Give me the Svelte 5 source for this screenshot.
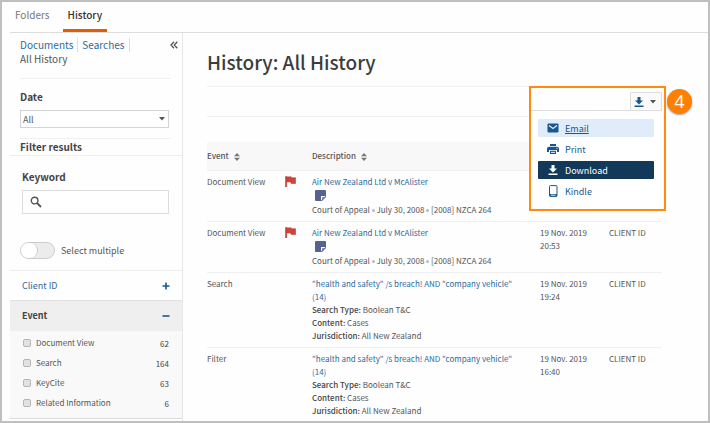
<script>
  let date = $state('All');
  let keyword = $state('');
  let multiple = $state(false);

  const events = [
    { id: 'view', label: 'Document View', count: 62 },
    { id: 'search', label: 'Search', count: 164 },
    { id: 'keycite', label: 'KeyCite', count: 63 },
    { id: 'related', label: 'Related Information', count: 6 }
  ];

  const rows = [
    { event: 'Document View', document: true, day: '', time: '', client: '' },
    { event: 'Document View', document: true, day: '19 Nov. 2019', time: '20:53', client: 'CLIENT ID' },
    { event: 'Search', document: false, day: '19 Nov. 2019', time: '19:24', client: 'CLIENT ID' },
    { event: 'Filter', document: false, day: '19 Nov. 2019', time: '16:40', client: 'CLIENT ID' }
  ];
</script>

{#snippet download()}
  <svg class="icon" viewBox="0 0 12 12" aria-hidden="true">
    <path d="M4.500 1h3v3.500H10L6 8.500 2 4.500h2.500zM1.500 9.500h9V11h-9z" fill="currentColor" />
  </svg>
{/snippet}

{#snippet sorter()}
  <svg class="sorter" viewBox="0 0 6 8" aria-hidden="true">
    <path d="M3 0l3 3.300H0zM3 8l3-3.300H0z" fill="currentColor" />
  </svg>
{/snippet}

<div class="frame">
  <nav class="tabs">
    <a href="#folders">Folders</a>
    <a href="#history" class="current" aria-current="page">History</a>
  </nav>

  <div class="body">
    <aside>
      <div class="scope">
        <div class="crumbs">
          <div><a href="#documents">Documents</a><a href="#searches">Searches</a></div>
          <button class="plain collapse" aria-label="Collapse panel">
            <svg viewBox="0 0 8 8" aria-hidden="true"><path d="M4 .8L1 4l3 3.200M7.300.8l-3 3.200 3 3.200" fill="none" stroke="currentColor" stroke-width="1.300" /></svg>
          </button>
        </div>
        <div class="all">All History</div>
      </div>
      <div class="date">
        <label for="date">Date</label>
        <div class="select">
          <select id="date" bind:value={date}><option>All</option></select>
          <svg viewBox="0 0 6 4" aria-hidden="true"><path d="M0 0h6L3 3.500z" fill="#555" /></svg>
        </div>
      </div>
      <h2>Filter results</h2>
      <div class="keyword">
        <label for="keyword">Keyword</label>
        <div class="search">
          <svg viewBox="0 0 12 12" aria-hidden="true"><circle cx="4.600" cy="4.600" r="3.300" fill="none" stroke="#555" stroke-width="1.400" /><path d="M7 7l4 4" stroke="#555" stroke-width="1.800" /></svg>
          <input id="keyword" type="text" bind:value={keyword} />
        </div>
        <label class="multiple">
          <input type="checkbox" role="switch" bind:checked={multiple} />
          Select multiple
        </label>
      </div>
      <button class="plain facet">
        <span>Client ID</span>
        <svg viewBox="0 0 8 8" aria-hidden="true"><path d="M4 .5v7M.5 4h7" stroke="#17578f" stroke-width="1.600" /></svg>
      </button>
      <button class="plain facet open">
        <span>Event</span>
        <svg viewBox="0 0 8 8" aria-hidden="true"><path d="M.5 4h7" stroke="#17578f" stroke-width="1.600" /></svg>
      </button>
      <ul class="events">
        {#each events as item}
          <li>
            <input type="checkbox" id={item.id} />
            <label for={item.id}>{item.label}</label>
            <span>{item.count}</span>
          </li>
        {/each}
      </ul>
    </aside>

    <main>
      <h1>History: All History</h1>
      <div class="toolbar">
        <div class="export">
          <button class="trigger" aria-label="Delivery options" aria-expanded="true">
            {@render download()}
            <svg class="caret" viewBox="0 0 6 4" aria-hidden="true"><path d="M0 0h6L3 3.500z" fill="#555" /></svg>
          </button>
          <div class="menu">
            <button class="plain hover">
              <svg class="icon" viewBox="0 0 12 12" aria-hidden="true"><rect x=".5" y="1.500" width="11" height="9" rx="1" fill="currentColor" /><path d="M2 3.500l4 3 4-3" fill="none" stroke="#e0ecfa" stroke-width="1.200" /></svg>
              <span>Email</span>
            </button>
            <button class="plain">
              <svg class="icon" viewBox="0 0 12 12" aria-hidden="true"><path d="M3 1h6v2H3zM2 3.700h8a2 2 0 0 1 2 2V9h-2V7H2v2H0V5.700a2 2 0 0 1 2-2zM3 7.800h6V11H3z" fill="currentColor" /><path d="M4 9.400h4" stroke="#fff" stroke-width=".9" /><circle cx="10" cy="5.300" r=".6" fill="#fff" /></svg>
              <span>Print</span>
            </button>
            <button class="plain selected">
              {@render download()}
              <span>Download</span>
            </button>
            <button class="plain">
              <svg class="icon" viewBox="0 0 12 12" aria-hidden="true"><rect x="2.500" y=".6" width="7.500" height="10.800" rx="1" fill="none" stroke="currentColor" /><path d="M2.500 9h7.500v2.400H2.500z" fill="currentColor" /><path d="M4 10.200h4.500" stroke="#fff" stroke-width=".9" /></svg>
              <span>Kindle</span>
            </button>
          </div>
          <div class="callout"></div>
          <div class="badge">4</div>
        </div>
      </div>

      <table>
        <colgroup><col class="c-event" /><col class="c-flag" /><col /><col class="c-date" /><col class="c-client" /></colgroup>
        <thead>
          <tr>
            <th scope="col">Event {@render sorter()}</th>
            <td></td>
            <th scope="col">Description {@render sorter()}</th>
            <td></td>
            <td></td>
          </tr>
        </thead>
        <tbody>
          {#each rows as row}
            <tr>
              <td>{row.event}</td>
              <td>
                {#if row.document}
                  <svg class="flag" viewBox="0 0 11 11" aria-hidden="true"><path d="M.5.5h5.500l.6 1.200h4v5.800H6.200L5.600 6.300H1.800V11H.5z" fill="#cf433b" /><path d="M.5.5h1.200V11H.5zM6 .5l.6 1.200h4v5.800H6.200L5.600 6.300" fill="none" stroke="#b5322e" stroke-width=".5" /></svg>
                {/if}
              </td>
              <td>
                {#if row.document}
                  <a href="#case">Air New Zealand Ltd v McAlister</a>
                  <svg class="note" viewBox="0 0 11 11" aria-hidden="true"><path d="M1 0h9a1 1 0 0 1 1 1v6l-4 4H1a1 1 0 0 1-1-1V1a1 1 0 0 1 1-1z" fill="#58628f" /><path d="M6 10.500V6h4.500z" fill="#fff" /><path d="M7.200 9.400V7.200h2.200z" fill="#58628f" /></svg>
                  <div class="cite">Court of Appeal <i></i> July 30, 2008 <i></i> [2008] NZCA 264</div>
                {:else}
                  <a href="#query">"health and safety" /s breach! AND "company vehicle" (14)</a>
                  <div><b>Search Type:</b> Boolean T&amp;C</div>
                  <div><b>Content:</b> Cases</div>
                  <div><b>Jurisdiction:</b> All New Zealand</div>
                {/if}
              </td>
              <td>{row.day}<br />{row.time}</td>
              <td>{row.client}</td>
            </tr>
          {/each}
        </tbody>
      </table>
    </main>
  </div>
</div>

<style>
  .frame,
  .frame * {
    box-sizing: border-box;
  }
  .frame {
    min-height: 100vh;
    display: flex;
    flex-direction: column;
    border: 2px solid #bfbfbf;
    padding-left: 8px;
    background: #fefefe;
    color: #555;
    font: 9px/13px 'Noto Sans CJK SC', 'Noto Sans', sans-serif;
  }
  a {
    color: #2c6a9c;
    text-decoration: none;
  }
  button,
  input,
  select {
    font: inherit;
    color: inherit;
    margin: 0;
  }
  .plain {
    border: 0;
    padding: 0;
    background: none;
    cursor: pointer;
  }
  svg {
    display: block;
    flex: none;
  }

  .tabs {
    display: flex;
    gap: 8px;
    height: 31px;
    border-bottom: 1px solid #ddd;
    font-size: 10px;
    line-height: 25px;
  }
  .tabs a {
    padding: 0 5px;
    height: 30px;
    color: #777;
  }
  .tabs .current {
    color: #333;
    font-weight: 500;
    border-bottom: 3px solid #e35d05;
  }

  .body {
    flex: 1;
    display: flex;
  }
  aside {
    flex: none;
    width: 173px;
    border-right: 1px solid #e6e6e6;
  }
  .scope {
    margin: 0 11px 0 10px;
    padding-top: 5px;
    height: 46px;
    border-bottom: 1px solid #f0f0f0;
    font-size: 10px;
    line-height: 14px;
  }
  .crumbs {
    display: flex;
    justify-content: space-between;
  }
  .crumbs a {
    display: inline-block;
    padding-right: 4px;
    margin-right: 4px;
    border-right: 1px solid #ddd;
  }
  .collapse {
    margin-right: -7px;
  }
  .collapse svg {
    width: 8px;
    height: 8px;
  }
  .date {
    margin: 0 11px 0 10px;
    padding-top: 10px;
    height: 60px;
    border-bottom: 1px solid #f0f0f0;
  }
  .date label,
  h2,
  .keyword > label:first-child {
    display: block;
    margin: 0;
    color: #444;
    font-size: 10px;
    line-height: 16px;
    font-weight: 700;
  }
  .select {
    display: grid;
    align-items: center;
    margin: 5px 2px 0 0;
  }
  .select > * {
    grid-area: 1 / 1;
  }
  select {
    appearance: none;
    width: 100%;
    height: 18px;
    padding: 0 2px;
    border: 1px solid #d4d4d4;
    border-radius: 0;
    background: #fff;
  }
  .select svg {
    justify-self: end;
    margin-right: 4px;
    width: 6px;
    height: 4px;
  }
  h2 {
    padding-left: 10px;
    height: 17px;
    border-bottom: 1px solid #eee;
  }
  .keyword {
    height: 115px;
    padding: 13px 13px 0 12px;
    border-bottom: 1px solid #eee;
  }
  .search {
    display: grid;
    align-items: center;
    margin-top: 5px;
  }
  .search > * {
    grid-area: 1 / 1;
  }
  .search svg {
    z-index: 1;
    margin-left: 8px;
    width: 12px;
    height: 12px;
  }
  .search input {
    width: 100%;
    height: 24px;
    padding: 0 8px 0 26px;
    border: 1px solid #ddd;
    background: #fff;
  }
  .multiple {
    display: flex;
    align-items: center;
    gap: 6px;
    margin: 28px 0 0 -2px;
  }
  .multiple input {
    appearance: none;
    width: 35px;
    height: 17px;
    border: 1px solid #ccc;
    border-radius: 9px;
    background: #ececec;
  }
  .multiple input::before {
    content: '';
    display: block;
    width: 16px;
    height: 15px;
    border-right: 1px solid #ccc;
    border-radius: 8px;
    background: #fff;
  }
  .multiple input:checked::before {
    margin-left: auto;
  }
  .facet {
    display: flex;
    align-items: center;
    justify-content: space-between;
    width: 100%;
    height: 30px;
    padding: 0 12px;
    color: #2c6a9c;
    border-bottom: 1px solid #e0e0e0;
  }
  .facet svg {
    width: 8px;
    height: 8px;
  }
  .facet.open {
    background: #efefef;
    border-bottom-color: #efefef;
    color: #444;
    font-weight: 700;
  }
  .events {
    list-style: none;
    margin: 0;
    padding: 5px 13px 9px;
    border-bottom: 1px solid #ddd;
    background: #f9f9f9;
    font-size: 8px;
    display: grid;
    gap: 7px;
  }
  .events li {
    display: flex;
    align-items: center;
    gap: 5px;
  }
  .events span {
    margin-left: auto;
    padding-top: 2px;
    line-height: 11px;
    color: #444;
  }
  .events input {
    appearance: none;
    width: 8px;
    height: 8px;
    border: 1px solid #b5b5b5;
    border-radius: 2px;
    background: #e2e2e2;
  }
  .events input:checked {
    background: #17578f;
  }

  main {
    flex: 1;
    min-width: 0;
    padding: 0 46px 0 24px;
  }
  h1 {
    margin: 0;
    height: 54px;
    padding-top: 14px;
    border-bottom: 1px solid #f0f0f0;
    color: #3c3c3c;
    font-size: 19px;
    line-height: 30px;
    font-weight: 500;
  }
  .toolbar {
    display: flex;
    justify-content: flex-end;
    height: 30px;
    margin-bottom: 25px;
    padding-top: 5px;
    border-bottom: 1px solid #f0f0f0;
  }
  .export {
    position: relative;
  }
  .trigger {
    position: relative;
    z-index: 1;
    display: flex;
    align-items: center;
    justify-content: space-between;
    width: 32px;
    height: 19px;
    padding: 0 5px 0 2px;
    border: 1px solid #ddd;
    border-radius: 1px;
    background: #fafafa;
    color: #17578f;
  }
  .icon {
    width: 12px;
    height: 12px;
  }
  .caret {
    width: 6px;
    height: 4px;
  }
  .menu {
    position: absolute;
    top: 18px;
    right: 0;
    width: 132px;
    padding: 8px;
    border-top: 1px solid #ddd;
    background: #fff;
    display: grid;
    gap: 3px;
  }
  .menu button {
    display: flex;
    align-items: center;
    gap: 6px;
    height: 18px;
    padding: 0 9px;
    border-radius: 1px;
    color: #17578f;
  }
  .menu .hover {
    background: #e0ecfa;
  }
  .menu .hover span {
    text-decoration: underline;
  }
  .menu .selected {
    background: #12395a;
    color: #fff;
  }
  .callout {
    position: absolute;
    top: -6px;
    right: -4px;
    width: 137px;
    height: 125px;
    border: 2px solid #ff8a0d;
    pointer-events: none;
  }
  .badge {
    position: absolute;
    top: -3px;
    left: 37px;
    width: 25px;
    height: 25px;
    border-radius: 50%;
    background: #ff8000;
    box-shadow: 0 1px 2px #999;
    color: #fff;
    font: 18px/25px 'Open Sans', sans-serif;
    text-align: center;
  }

  table {
    width: 100%;
    table-layout: fixed;
    border-collapse: collapse;
    font-size: 8px;
  }
  .c-event {
    width: 78px;
  }
  .c-flag {
    width: 27px;
  }
  .c-date {
    width: 69px;
  }
  .c-client {
    width: 53px;
  }
  th,
  td {
    padding: 4px 0 5px;
    text-align: left;
    vertical-align: top;
    border-bottom: 1px solid #f0f0f0;
  }
  td:nth-child(3) {
    padding-right: 12px;
  }
  tbody tr:last-child td {
    padding-bottom: 0;
    border-bottom: 0;
  }
  thead th,
  thead td {
    height: 28px;
    padding: 0;
    background: #f8f8f8;
    vertical-align: middle;
    font-weight: 500;
  }
  .sorter {
    display: inline-block;
    margin-left: 3px;
    width: 6px;
    height: 8px;
    color: #777;
    vertical-align: middle;
  }
  .flag {
    margin-top: 1px;
    width: 11px;
    height: 11px;
  }
  .note {
    margin: 2px 0 0 3px;
    width: 11px;
    height: 11px;
  }
  .cite {
    margin-top: 2px;
  }
  .cite i {
    display: inline-block;
    width: 3px;
    height: 3px;
    margin-bottom: 1px;
    border-radius: 50%;
    background: #bbb;
  }
  b {
    color: #444;
    font-weight: 500;
  }
</style>
